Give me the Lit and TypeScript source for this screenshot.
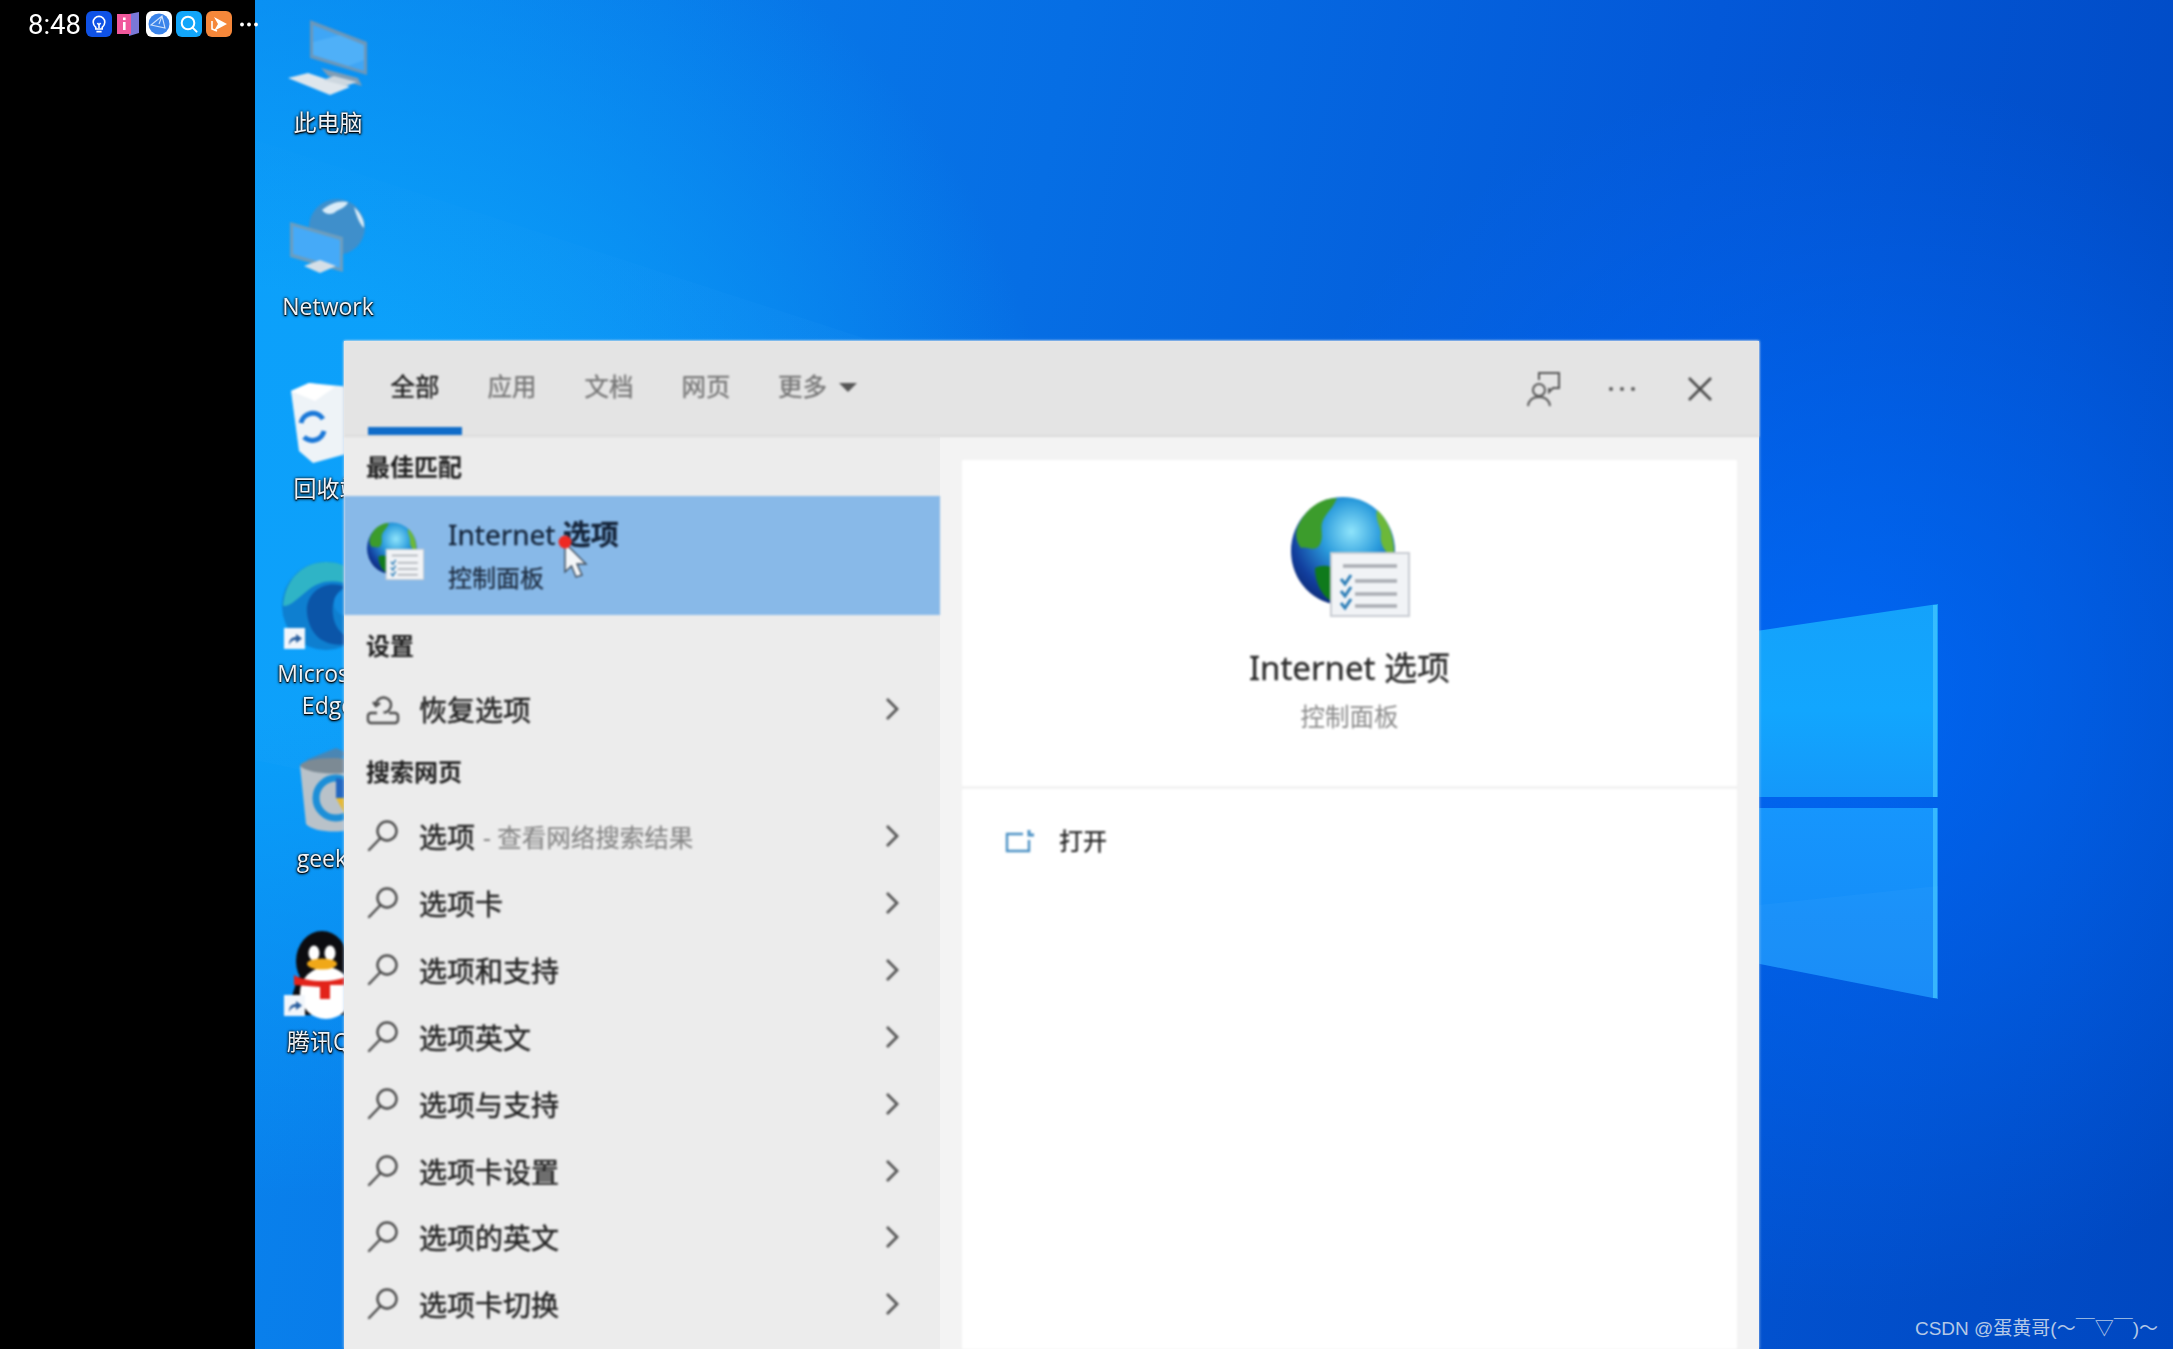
import { css, html, svg, LitElement } from 'lit';
import { customElement } from 'lit/decorators.js';

// checklist globe, used small in the result row and big in the preview card
const globeIcon = (size: number) => html`
  <svg width=${size} height=${size} viewBox="0 0 121 121">
    <defs>
      <radialGradient id="sea" cx="58%" cy="32%" r="72%">
        <stop offset="0" stop-color="#8fe4fb" />
        <stop offset=".4" stop-color="#2a9bdc" />
        <stop offset=".8" stop-color="#123f9e" />
        <stop offset="1" stop-color="#0c2a78" />
      </radialGradient>
    </defs>
    <ellipse cx="54" cy="55" rx="52" ry="54" fill="url(#sea)" />
    <path d="M10 28 C20 8 36 2 48 2 C44 12 38 16 34 24 C30 34 36 40 30 50 C24 56 18 50 12 52 C6 44 6 36 10 28Z" fill="#3c9c2c" />
    <path d="M26 72 C38 66 48 72 56 84 C60 96 52 104 44 106 C32 100 26 86 26 72Z" fill="#0f7a1c" />
    <path d="M88 14 C98 22 106 40 105 60 C96 58 90 48 92 36 C90 28 86 22 88 14Z" fill="#6cb83a" />
    <rect x="42" y="57" width="78" height="63" fill="#f1f3f6" stroke="#c8ccd2" stroke-width="2" />
    <g stroke="#a9adb3" stroke-width="3.4">
      <path d="M54 70H108M66 85H108M66 98H108M66 110H108" />
    </g>
    <g stroke="#2e7fb8" stroke-width="3" fill="none">
      <path d="M52 83l4 5 6-9M52 95l4 5 6-9M52 107l4 5 6-9" />
    </g>
  </svg>
`;

const searchIcon = html`
  <svg width="34" height="34" viewBox="0 0 34 34" fill="none" stroke="#4a4a4a" stroke-width="2.4">
    <circle cx="21" cy="12" r="9.5" />
    <path d="M14.5 19 L3 31" stroke-linecap="round" />
  </svg>
`;

const recoverIcon = html`
  <svg width="34" height="34" viewBox="0 0 34 34" fill="none" stroke="#4a4a4a" stroke-width="2.4">
    <path d="M10 13 a7.5 7.5 0 1 1 7.5 7.5" />
    <path d="M7 10 l3 4 4-3" />
    <path d="M11 21 H5 a3 3 0 0 0-3 3 V28 a3 3 0 0 0 3 3 H29 a3 3 0 0 0 3-3 V24 a3 3 0 0 0-3-3 H23" />
  </svg>
`;

const chevron = html`
  <svg class="chev" width="14" height="24" viewBox="0 0 14 24" fill="none" stroke="#555" stroke-width="2.8">
    <path d="M2 2 L12 12 L2 22" />
  </svg>
`;

const statusIcons = [
  html`<svg width="26" height="26" viewBox="0 0 26 26">
    <rect width="26" height="26" rx="6" fill="#0f52e6" />
    <g fill="none" stroke="#fff" stroke-width="1.6">
      <path d="M9.8 16.4 C8.4 15 7.2 13.6 7.2 11.2 a5.8 5.8 0 0 1 11.6 0 C18.8 13.6 17.6 15 16.2 16.4 V18 H9.8Z" />
      <path d="M10.4 20.6 H15.6M11.4 12 L13 14 L14.6 12M13 14 V17" />
    </g>
  </svg>`,
  html`<svg class="book" width="22" height="26" viewBox="0 0 22 26">
    <path d="M12 3 L22 1 V22 L12 25Z" fill="#7a78d8" />
    <path d="M0 3 H14 V23 H0Z" fill="#f0589c" />
    <rect x="6" y="11" width="2.6" height="8" fill="#fff" />
    <rect x="6" y="6.5" width="2.6" height="2.6" fill="#fff" />
  </svg>`,
  html`<svg width="26" height="26" viewBox="0 0 26 26">
    <rect width="26" height="26" rx="6" fill="#fff" />
    <circle cx="13" cy="13" r="10.5" fill="#3b84ea" />
    <path d="M5 14 L16 5 L19 17 Z M16 5 L13 13" fill="none" stroke="#cfe2fb" stroke-width="1.1" />
  </svg>`,
  html`<svg width="26" height="26" viewBox="0 0 26 26" fill="none">
    <rect width="26" height="26" rx="6" fill="#12a6fa" />
    <circle cx="12" cy="12" r="6.3" stroke="#fff" stroke-width="2" />
    <path d="M16.6 16.6 L20.6 20.6" stroke="#fff" stroke-width="2" stroke-linecap="round" />
  </svg>`,
  html`<svg width="26" height="26" viewBox="0 0 26 26">
    <rect width="26" height="26" rx="6" fill="#f5873a" />
    <path d="M8 6 L21 13 L8 20 L12 13Z" fill="#fff" />
    <path d="M6 10 V18 L11 20" fill="none" stroke="#fff" stroke-width="1.6" />
  </svg>`,
];

const shortcut = svg`
  <rect x="0" y="0" width="21" height="21" fill="#f2f6fb" />
  <path d="M5 17 C5 11 8 9 12 9 V6 L18 10.5 L12 15 V12 C9 12 7 13 5 17Z" fill="#2a5e9e" />
`;

// coordinates on the desktop canvas, label y is the text centre
const desktopItems = [
  {
    label: '此电脑', y: 122, dx: 0, x: 288, top: 18, w: 80, h: 78,
    art: svg`
      <path d="M33 50 L70 60 L74 68 L40 58Z" fill="#7f9db5" />
      <path d="M22 2 L79 24 V57 L22 40Z" fill="#6d97b8" />
      <path d="M25 7 L76 27 V53 L25 37Z" fill="#3fa6f6" />
      <path d="M25 37 V24 L52 17 L76 27 V42 L60 48Z" fill="#5cb8fa" opacity=".55" />
      <path d="M0 60 L20 55 L62 69 L42 77Z" fill="#dfe6ec" />
      <path d="M35 62 L46 58 L69 64 L58 68Z" fill="#cdd7df" />
    `,
  },
  {
    label: 'Network', y: 306, dx: 0, x: 290, top: 202, w: 76, h: 76,
    art: svg`
      <circle cx="47" cy="25" r="28" fill="#3f8fcb" />
      <path d="M32 8 C40 1 50 -2 58 0 C56 6 50 6 44 11 C39 13 35 12 32 8Z M64 5 C71 11 75 19 74 26 C70 23 66 13 64 5Z" fill="#d9ecf8" />
      <path d="M0 20 L53 35 V70 L0 55Z" fill="#6d9dbd" />
      <path d="M3 24 L50 38 V66 L3 52Z" fill="#45aaf8" />
      <path d="M14 64 L30 58 L46 64 L30 71Z" fill="#d5dfe7" />
    `,
  },
  {
    label: '回收站', y: 488, dx: 0, x: 291, top: 381, w: 70, h: 84,
    art: svg`
      <path d="M0 10 L18 2 L60 6 L66 70 L22 82 L8 70Z" fill="#eef3f7" />
      <path d="M18 2 L44 6 L24 20 L0 10Z" fill="#fff" />
      <g fill="none" stroke="#1a78d8" stroke-width="5">
        <path d="M10 42 A12 12 0 0 1 32 38" />
        <path d="M33 50 A12 12 0 0 1 13 56" />
      </g>
    `,
  },
  {
    label: 'Microsoft\nEdge', y: 673, dx: 0, x: 281, top: 561, w: 90, h: 90,
    art: svg`
      <circle cx="45" cy="45" r="44" fill="#0e7fd0" />
      <path d="M2 45 C4 16 24 1 45 1 C66 1 84 14 88 40 C72 18 44 14 26 30 C14 40 8 46 2 45Z" fill="#2fb4c6" />
      <path d="M26 52 C24 30 46 18 64 26 C56 30 50 40 52 54 C54 70 66 80 80 76 C68 88 30 90 26 52Z" fill="#0b55a8" />
      <circle cx="66" cy="42" r="13" fill="#128ce2" />
      <g transform="translate(3 67)">${shortcut}</g>
    `,
  },
  {
    label: 'geek64', y: 858, dx: 7, x: 300, top: 748, w: 70, h: 84,
    art: svg`
      <path d="M6 12 L36 0 L50 6 L22 18Z" fill="#4a86b4" />
      <ellipse cx="34" cy="18" rx="34" ry="8" fill="#7c8a94" />
      <path d="M0 18 C10 28 58 28 68 18 L62 76 C54 86 14 86 6 76Z" fill="#b9c2c9" />
      <circle cx="36" cy="50" r="20" fill="none" stroke="#1c8fd8" stroke-width="7" />
      <path d="M36 50 H56 A20 20 0 0 1 46 68Z" fill="#e8b930" />
      <path d="M36 30 A20 20 0 0 1 56 50 H36Z" fill="#2266c0" />
    `,
  },
  {
    label: '腾讯QQ', y: 1041, dx: 0, x: 284, top: 931, w: 90, h: 92,
    art: svg`
      <ellipse cx="38" cy="30" rx="26" ry="30" fill="#0c0c10" />
      <path d="M14 46 L4 78 L20 84 L62 84 L70 50Z" fill="#0c0c10" />
      <ellipse cx="42" cy="62" rx="26" ry="26" fill="#fff" />
      <ellipse cx="30" cy="22" rx="5.5" ry="7.5" fill="#fff" />
      <ellipse cx="46" cy="22" rx="5.5" ry="7.5" fill="#fff" />
      <ellipse cx="38" cy="33" rx="15" ry="5.5" fill="#f0a818" />
      <path d="M10 44 C24 52 52 52 66 44 V54 H46 V68 H36 V56 L10 54Z" fill="#e2231a" />
      <g transform="translate(0 64)">${shortcut}</g>
    `,
  },
];

const webRows = ['选项卡', '选项和支持', '选项英文', '选项与支持', '选项卡设置', '选项的英文', '选项卡切换'];

@customElement('app-root')
export class AppRoot extends LitElement {
  static styles = css`
    :host {
      display: grid;
      grid-template-columns: 255px 1fr;
      width: 2173px;
      height: 1349px;
      overflow: hidden;
      background: #000;
      font-family: 'Noto Sans', 'Noto Sans CJK SC', sans-serif;
      color: #222;
    }
    .side { background: #000; position: relative; z-index: 1; }
    .status {
      display: flex;
      align-items: center;
      height: 48px;
      padding-left: 28px;
      color: #fff;
      filter: blur(.4px);
    }
    .clock {
      font: 400 27.5px Roboto, sans-serif;
      width: 58px;
      flex: none;
    }
    .status-icons { display: flex; align-items: center; gap: 4px; flex: none; }
    .status-icons svg { flex: none; }
    .status-icons .book { margin: 0 3px 0 1px; }
    .status-dots { flex: none; margin-left: 8px; }
    .desktop {
      position: relative;
      overflow: hidden;
      background:
        radial-gradient(620px 620px at 1580px 690px, rgba(0, 110, 255, .75), rgba(0, 100, 240, 0) 100%),
        radial-gradient(800px 700px at 0 500px, rgba(10, 160, 250, 1) 30%, rgba(10, 160, 250, 0) 100%),
        linear-gradient(100deg, #0a86ee 0%, #066ee4 38%, #0358d8 68%, #0047c0 100%);
    }
    .wall { position: absolute; inset: 0; }
    .item { position: absolute; filter: blur(.8px); }
    .item-label {
      position: absolute;
      left: 13px;
      width: 120px;
      text-align: center;
      white-space: pre-line;
      font: 400 23px/32px 'Open Sans', 'Noto Sans CJK SC', sans-serif;
      color: #eef3f8;
      text-shadow: 0 1px 3px #000, 0 0 3px #000, 0 1px 1px #000;
      filter: blur(.7px);
    }
    .window {
      position: absolute;
      left: 89px;
      top: 341px;
      width: 1415px;
      height: 1008px;
      display: flex;
      flex-direction: column;
      background: #ececec;
      box-shadow: 0 0 3px rgba(190, 215, 245, .9);
    }
    .blurred { filter: blur(.9px); }
    .head {
      display: flex;
      align-items: center;
      height: 96px;
      flex: none;
      background: #e4e4e4;
      padding-left: 24px;
      box-shadow: inset 0 -2px 2px #dcdcdc;
    }
    .tab {
      position: relative;
      width: 94px;
      margin-right: 3px;
      text-align: center;
      font-size: 24.5px;
      line-height: 92px;
      height: 96px;
      color: #757575;
      -webkit-text-stroke: .3px #757575;
    }
    .tab.on { color: #1c1c1c; -webkit-text-stroke: .4px #1c1c1c; }
    .tab.on::after {
      content: '';
      position: absolute;
      left: 0;
      right: 0;
      bottom: 2px;
      height: 8px;
      background: #0f6cc9;
    }
    .tab.more { display: flex; align-items: center; gap: 12px; width: 112px; padding-left: 22px; box-sizing: content-box; height: 92px; padding-bottom: 4px; }
    .caret {
      width: 0;
      height: 0;
      border: 9px solid transparent;
      border-top: 9px solid #555;
      border-bottom: 0;
      flex: none;
    }
    .head-tools { margin-left: auto; display: flex; align-items: center; padding-right: 46px; }
    .tool-more { margin: 0 50px 0 47px; }
    .body { flex: 1; display: flex; min-height: 0; }
    .left { width: 596px; flex: none; }
    .group {
      height: 62px;
      padding-left: 22px;
      font-size: 24px;
      font-weight: 700;
      line-height: 62px;
      color: #1e1e1e;
    }
    .best { height: 59px; line-height: 59px; }
    .hit {
      position: relative;
      display: flex;
      height: 119px;
      padding-left: 22px;
      background: #88b9e8;
      align-items: center;
      gap: 24px;
    }
    .hit-ico { display: flex; margin-bottom: 10px; }
    .hit-title { font-size: 28px; line-height: 40px; color: #14243a; -webkit-text-stroke: .3px #14243a; }
    .hit-title b { font-weight: 700; }
    .hit-sub { font-size: 24px; line-height: 38px; color: #1d2c40; margin-top: 5px; -webkit-text-stroke: .3px #1d2c40; }
    .cursor { position: absolute; left: 212px; top: 39px; }
    .row {
      display: flex;
      align-items: center;
      height: 66.85px;
      padding-left: 22px;
      font-size: 28px;
      color: #242424;
      -webkit-text-stroke: .5px #242424;
    }
    .row .ico { width: 53px; flex: none; display: flex; }
    .row .dim { color: #858585; font-size: 24.5px; margin-left: 8px; -webkit-text-stroke: .2px #858585; }
    .row .chev { margin-left: auto; margin-right: 41px; }
    .row.settings { height: 64px; }
    .right {
      flex: 1;
      display: flex;
      flex-direction: column;
      gap: 3px;
      padding: 23px 22px 0;
      background: #f3f3f3;
    }
    .card { background: #fff; }
    .preview {
      height: 326px;
      display: flex;
      flex-direction: column;
      align-items: center;
      padding-top: 36px;
      box-sizing: border-box;
    }
    .preview-title { font-size: 33px; line-height: 46px; margin-top: 28px; color: #2c2c2c; -webkit-text-stroke: .3px #2c2c2c; }
    .preview-sub { font-size: 24.5px; line-height: 34px; margin-top: 9px; color: #8a8a8a; }
    .actions { flex: 1; padding: 35px 43px; }
    .action { display: flex; align-items: center; gap: 24px; font-size: 24px; line-height: 34px; color: #222; -webkit-text-stroke: .3px #222; }
    .mark {
      position: absolute;
      right: 15px;
      bottom: 8px;
      font: 400 19px/24px 'Liberation Sans', 'Noto Sans CJK SC', sans-serif;
      color: #b4c8e6;
    }
  `;

  render() {
    return html`
      <div class="side">
        <div class="status">
          <span class="clock">8:48</span>
          <div class="status-icons">${statusIcons}</div>
          <svg class="status-dots" width="18" height="5" viewBox="0 0 18 5" fill="#fff">
            <circle cx="2" cy="2.5" r="1.9" /><circle cx="9" cy="2.5" r="1.9" /><circle cx="16" cy="2.5" r="1.9" />
          </svg>
        </div>
      </div>
      <div class="desktop">
        ${this.renderWall()}
        ${desktopItems.map((d) => html`
          <svg class="item" style="left:${d.x - 255}px;top:${d.top}px" width=${d.w} height=${d.h} viewBox="0 0 ${d.w} ${d.h}" overflow="visible">${d.art}</svg>
          <div class="item-label" style="top:${d.y - 16}px;margin-left:${d.dx}px">${d.label}</div>
        `)}
        <div class="window">
          <div class="head blurred">
            <div class="tab on">全部</div>
            <div class="tab">应用</div>
            <div class="tab">文档</div>
            <div class="tab">网页</div>
            <div class="tab more">更多<span class="caret"></span></div>
            <div class="head-tools">
              <svg width="34" height="36" viewBox="0 0 34 36" fill="none" stroke="#555" stroke-width="2">
                <circle cx="13" cy="19" r="6" />
                <path d="M2 35 C3 28 7 26 13 26 C19 26 23 28 24 35" />
                <path d="M13 9 V2 H33 V17 H27 L23 21 V17" />
              </svg>
              <svg class="tool-more" width="30" height="6" viewBox="0 0 30 6" fill="#5a5a5a">
                <circle cx="4" cy="3" r="2" /><circle cx="15" cy="3" r="2" /><circle cx="26" cy="3" r="2" />
              </svg>
              <svg width="26" height="26" viewBox="0 0 26 26" stroke="#4a4a4a" stroke-width="2.6">
                <path d="M2 2 L24 24 M24 2 L2 24" />
              </svg>
            </div>
          </div>
          <div class="body">
            <div class="left blurred">
              <div class="group best">最佳匹配</div>
              <div class="hit">
                <span class="hit-ico">${globeIcon(58)}</span>
                <div>
                  <div class="hit-title">Internet <b>选项</b></div>
                  <div class="hit-sub">控制面板</div>
                </div>
                <svg class="cursor" width="34" height="46" viewBox="0 0 34 46">
                  <path d="M9 8 V37 L15.5 31 L20 42 L26 40 L21 29 L30 29Z" fill="#f4f6f8" stroke="#3b4a5a" stroke-width="1.4" />
                  <circle cx="9" cy="7" r="6.5" fill="#ee2a24" />
                </svg>
              </div>
              <div class="group">设置</div>
              <div class="row settings">
                <span class="ico">${recoverIcon}</span>恢复选项${chevron}
              </div>
              <div class="group">搜索网页</div>
              <div class="row">
                <span class="ico">${searchIcon}</span>选项<span class="dim">- 查看网络搜索结果</span>${chevron}
              </div>
              ${webRows.map((r) => html`
                <div class="row"><span class="ico">${searchIcon}</span>${r}${chevron}</div>
              `)}
            </div>
            <div class="right">
              <div class="card preview blurred">
                ${globeIcon(121)}
                <div class="preview-title">Internet 选项</div>
                <div class="preview-sub">控制面板</div>
              </div>
              <div class="card actions blurred">
                <div class="action">
                  <svg width="30" height="24" viewBox="0 0 30 24" fill="none" stroke="#4a90c4" stroke-width="2.4">
                    <path d="M18 5 H2 V22 H24 V11" />
                    <path d="M24 1 V6 H29" stroke-width="3" />
                  </svg>
                  打开
                </div>
              </div>
            </div>
          </div>
        </div>
        <div class="mark">CSDN @蛋黄哥(〜￣▽￣)〜</div>
      </div>
    `;
  }

  renderWall() {
    return html`
      <svg class="wall" viewBox="255 0 1918 1349" width="1918" height="1349">
        <defs>
          <linearGradient id="pane1" x1="0" y1="0" x2="0" y2="1">
            <stop offset="0" stop-color="#14a2fb" />
            <stop offset=".55" stop-color="#12a6fe" />
            <stop offset="1" stop-color="#1498fa" />
          </linearGradient>
          <linearGradient id="pane2" x1="0" y1="0" x2="0" y2="1">
            <stop offset="0" stop-color="#1696fd" />
            <stop offset="1" stop-color="#1488f6" />
          </linearGradient>
          <linearGradient id="beam" x1="1" y1="1" x2="0" y2="0">
            <stop offset="0" stop-color="#3aa8ff" stop-opacity=".35" />
            <stop offset="1" stop-color="#3aa8ff" stop-opacity=".05" />
          </linearGradient>
        </defs>
        <path d="M255 140 L1760 630 L1760 1080 L255 760Z" fill="url(#beam)" opacity=".5" />
        <path d="M1750 632 L1938 604 V797 H1750Z" fill="url(#pane1)" />
        <path d="M1750 808 H1938 V999 L1750 962Z" fill="url(#pane2)" />
        <path d="M1750 906 L1938 886 V999 L1750 962Z" fill="#4ab0ff" opacity=".12" />
        <path d="M1935 605 V797M1935 808 V998" stroke="#46c8ff" stroke-width="4" opacity=".7" />
      </svg>
    `;
  }
}
